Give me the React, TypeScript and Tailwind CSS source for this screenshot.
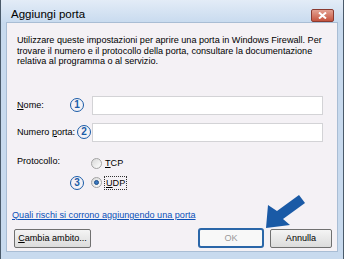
import React from "react";

function Circled({ n }: { n: string }) {
  return (
    <span className="inline-flex items-center justify-center w-[14px] h-[14px] shrink-0 rounded-full border-[1.5px] border-[#1a5ca8] text-[#1a5ca8] text-[10px] leading-none font-bold">
      {n}
    </span>
  );
}

function Radio({ checked }: { checked?: boolean }) {
  return (
    <span className="inline-flex items-center justify-center w-[11px] h-[11px] shrink-0 rounded-full border border-[#a3a3a3] bg-gradient-to-br from-[#d8d8d8] to-[#ffffff]">
      {checked && <span className="w-[5px] h-[5px] rounded-full bg-[#3a78c0] border border-[#1f4f8a]" />}
    </span>
  );
}

export default function App() {
  return (
    <div
      className="relative w-[344px] h-[259px] overflow-hidden bg-[#c8daee] border-l border-r border-[#4a5a6a] flex flex-col text-black"
      style={{ fontFamily: "'Liberation Sans', Arial, sans-serif" }}
    >
      {/* title bar */}
      <div className="h-[22px] shrink-0 flex items-center pl-[10px] pr-[9px] bg-gradient-to-b from-[#e3ecf7] to-[#c9dbef]">
        <span className="text-[11.5px] pt-[7px]">Aggiungi porta</span>
        <div className="ml-auto mt-[9px] w-[23px] h-[13px] rounded-[2px] border border-[#8a3a30] bg-gradient-to-b from-[#e3a293] to-[#c5533e] flex items-center justify-center">
          <svg width="9" height="7" viewBox="0 0 9 7">
            <path d="M1 0.5 L8 6.5 M8 0.5 L1 6.5" stroke="#ffffff" strokeWidth="2" />
          </svg>
        </div>
      </div>
      {/* content */}
      <div className="mx-[5px] flex-1 bg-[#f4f1f5] border border-[#a9bdd4] flex flex-col text-[9.1px] leading-[10.5px]">
        <p className="pl-[10px] pr-2 pt-[12px]">
          Utilizzare queste impostazioni per aprire una porta in Windows Firewall. Per trovare il numero e il protocollo della porta, consultare la documentazione relativa al programma o al servizio.
        </p>
        <div className="pl-[10px] mt-[29px] flex flex-col">
          <div className="flex items-center h-[19px]">
            <span className="w-[53px]"><u>N</u>ome:</span>
            <Circled n="1" />
            <div className="ml-[8px] w-[231px] h-[19px] bg-white border border-[#d3d3d6]" />
          </div>
          <div className="flex items-center h-[19px] mt-[8px]">
            <span className="w-[60px] whitespace-nowrap">Numero <u>p</u>orta:</span>
            <Circled n="2" />
            <div className="ml-[1px] w-[231px] h-[19px] bg-white border border-[#d3d3d6]" />
          </div>
          <div className="flex items-start mt-[15px]">
            <span className="w-[74px] -mt-[1px]">Protocollo:</span>
            <div className="flex items-center h-[14px] gap-[3px]">
              <Radio />
              <span><u>T</u>CP</span>
            </div>
          </div>
          <div className="flex items-center h-[16px] mt-[4px]">
            <span className="w-[53px]" />
            <Circled n="3" />
            <span className="ml-[7px] flex"><Radio checked /></span>
            <span className="ml-[2px] px-[1px] leading-[12px] border border-dotted border-[#333]"><u>U</u>DP</span>
          </div>
        </div>
        <div className="pl-[5px] mt-[19px] text-[#0a50b8] underline">
          Quali rischi si corrono aggiungendo una porta
        </div>
        <div className="flex items-center pl-[7px] pr-[5px] mt-[8px]">
          <button className="w-[77px] h-[19px] rounded-[2px] border border-[#707070] bg-gradient-to-b from-[#f4f4f4] to-[#dcdcdc]">
            <u>C</u>ambia ambito...
          </button>
          <button className="ml-auto w-[66px] h-[20px] rounded-[3px] border-2 border-[#2a66a8] bg-[#f8f8f8] text-[#9a9a9a]">
            OK
          </button>
          <button className="ml-[6px] w-[62px] h-[19px] rounded-[2px] border border-[#707070] bg-gradient-to-b from-[#f4f4f4] to-[#dcdcdc]">
            Annulla
          </button>
        </div>
      </div>
      <div className="h-[7px] shrink-0" />
      {/* arrow */}
      <svg className="absolute left-0 top-0 pointer-events-none" width="344" height="259">
        <polygon
          points="265,228 267,205 276,211 298,195 304,203 282,219 289,225"
          fill="#1a5aa6"
        />
      </svg>
    </div>
  );
}
